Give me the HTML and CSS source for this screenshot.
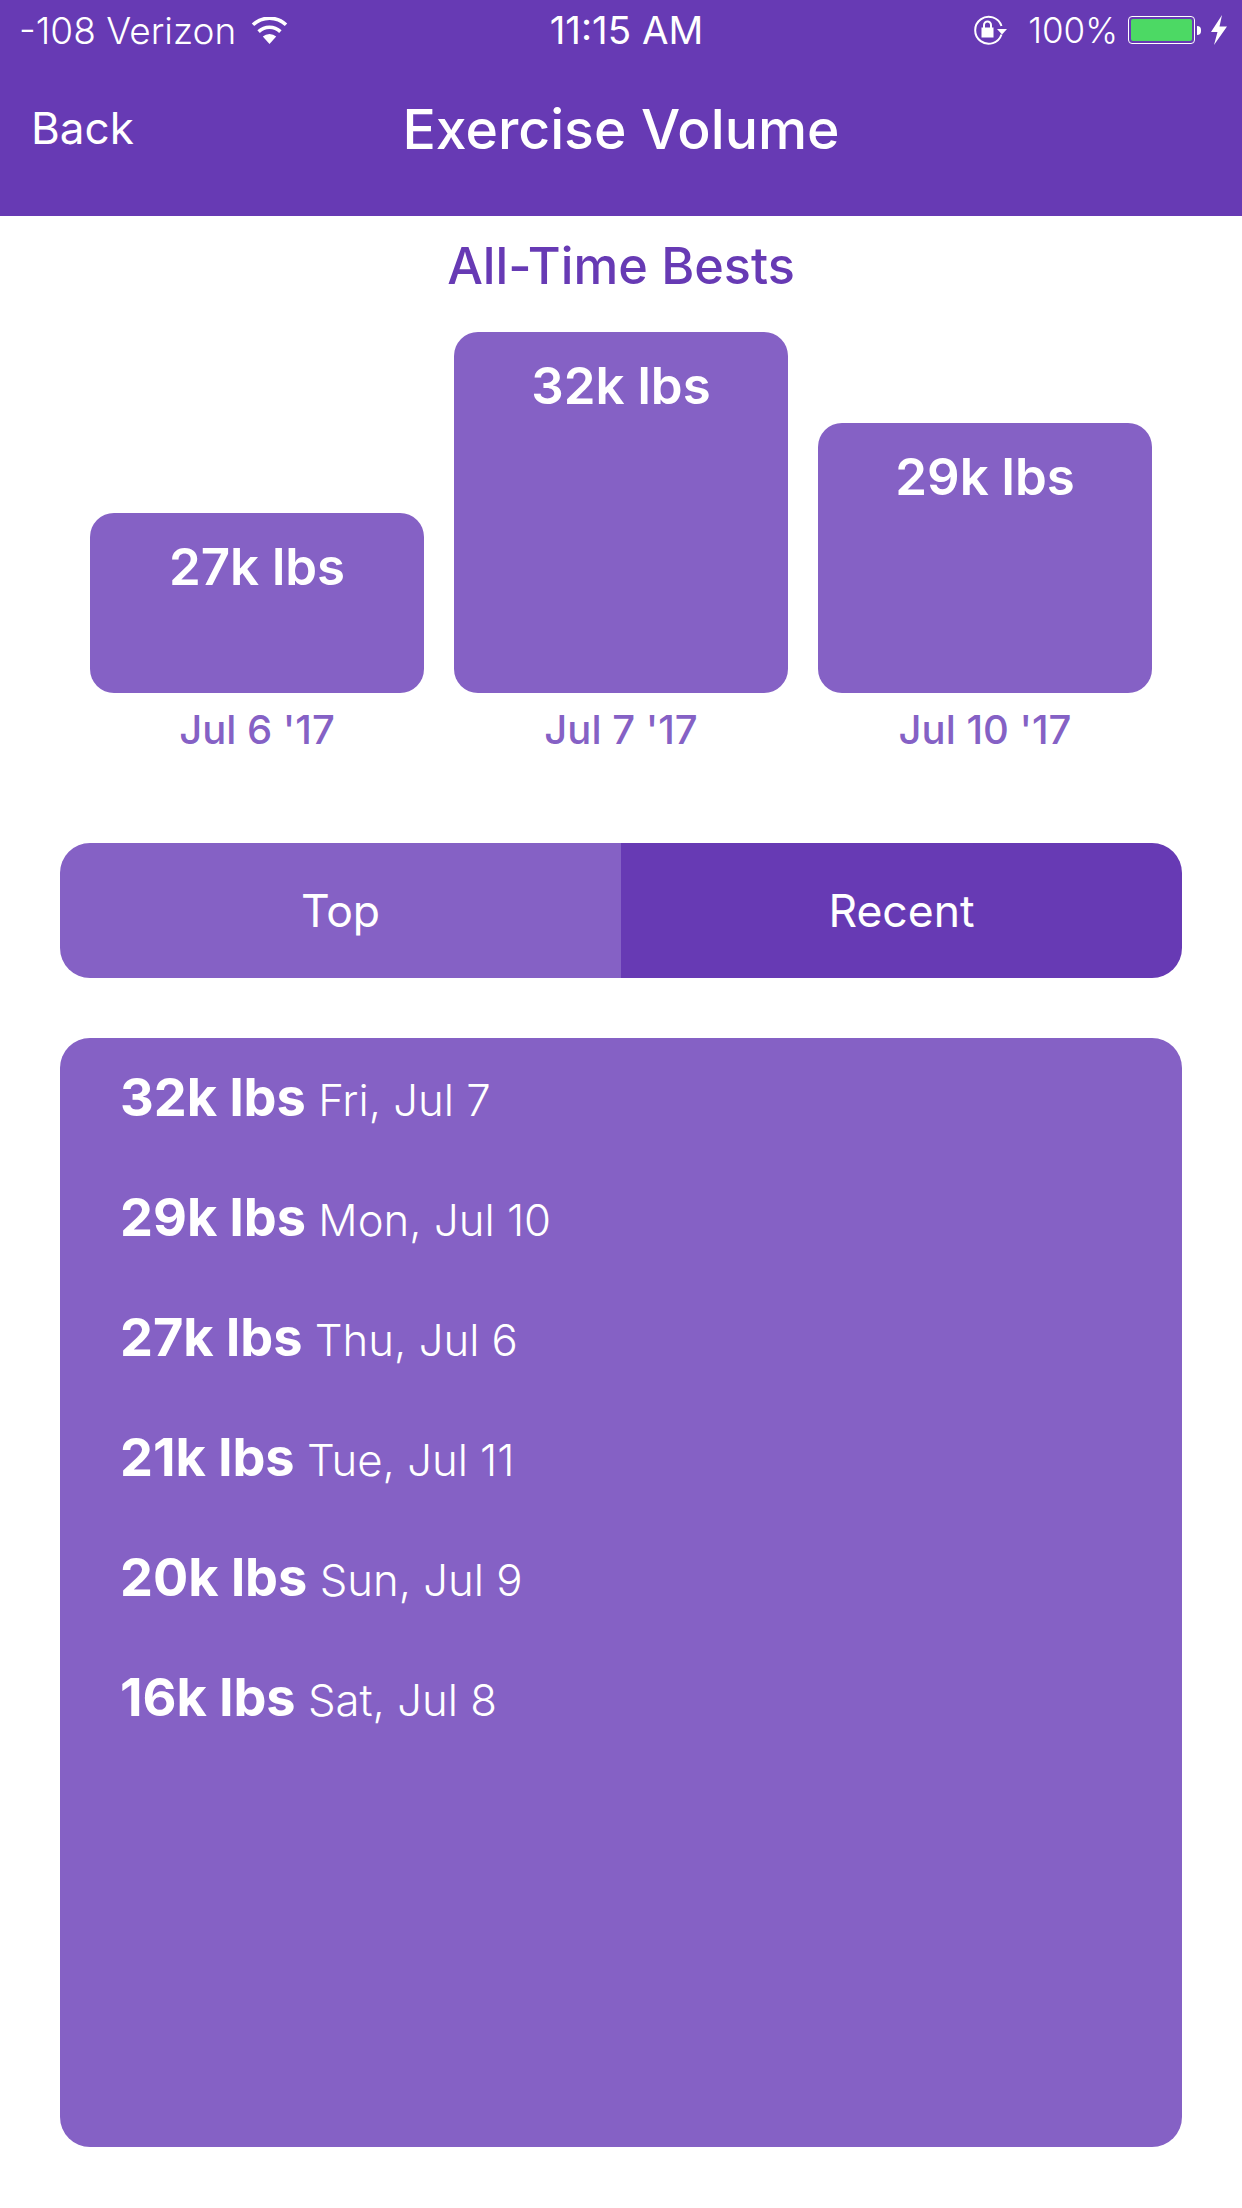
FILE: index.html
```html
<!DOCTYPE html>
<html lang="en">
<head>
  <meta charset="UTF-8" />
  <title>Exercise Volume</title>
  <link rel="stylesheet" href="styles.css">
</head>
<body>
  <div class="topbar">
    <div class="status">
      <div class="status-left">
        <span class="carrier">-108 Verizon</span>
        <svg class="wifi" width="37" height="27" viewBox="0 0 37 27">
          <path d="M18.5 27 L11.8 19.6 A10 10 0 0 1 25.2 19.6 Z" fill="#fff"/>
          <path d="M7.6 14.6 A16 16 0 0 1 29.4 14.6" fill="none" stroke="#fff" stroke-width="3.6"/>
          <path d="M2 7.8 A24 24 0 0 1 35 7.8" fill="none" stroke="#fff" stroke-width="3.6"/>
        </svg>
      </div>
      <span class="time">11:15 AM</span>
      <div class="status-right">
        <svg class="lock" width="35" height="30" viewBox="0 0 35 30">
          <path d="M28.5 19.5 A13.5 13.5 0 1 1 28.5 11" fill="none" stroke="#fff" stroke-width="2"/>
          <path d="M24 14 H34 L29 19.5 Z" fill="#fff"/>
          <rect x="8.5" y="12.5" width="12" height="10" fill="#fff"/>
          <path d="M11 13 V10 A3.5 3.5 0 0 1 18 10 V13" fill="none" stroke="#fff" stroke-width="2"/>
        </svg>
        <span class="batt-text">100%</span>
        <div class="battery"><div class="battery-fill"></div></div>
        <div class="battery-tip"></div>
        <svg class="bolt" width="16" height="30" viewBox="0 0 16 30">
          <path d="M11 0 L0 17 H6.5 L3 30 L16 11.5 H8.5 Z" fill="#fff"/>
        </svg>
      </div>
    </div>
    <div class="nav">
      <span class="back">Back</span>
      <span class="title">Exercise Volume</span>
      <span></span>
    </div>
  </div>

  <h2 class="bests-title">All-Time Bests</h2>

  <div class="chart">
    <div class="col">
      <div class="bar bar-27">27k lbs</div>
      <div class="col-date">Jul 6 '17</div>
    </div>
    <div class="col">
      <div class="bar bar-32">32k lbs</div>
      <div class="col-date">Jul 7 '17</div>
    </div>
    <div class="col">
      <div class="bar bar-29">29k lbs</div>
      <div class="col-date">Jul 10 '17</div>
    </div>
  </div>

  <div class="tabs">
    <div class="tab">Top</div>
    <div class="tab tab-on">Recent</div>
  </div>

  <div class="panel">
    <div class="row"><strong>32k lbs</strong> Fri, Jul 7</div>
    <div class="row"><strong>29k lbs</strong> Mon, Jul 10</div>
    <div class="row"><strong>27k lbs</strong> Thu, Jul 6</div>
    <div class="row"><strong>21k lbs</strong> Tue, Jul 11</div>
    <div class="row"><strong>20k lbs</strong> Sun, Jul 9</div>
    <div class="row"><strong>16k lbs</strong> Sat, Jul 8</div>
  </div>
</body>
</html>
```

FILE: styles.css
```css
body {
  margin: 0;
  width: 1242px;
  height: 2208px;
  overflow: hidden;
  background: #fff;
  font-family: Inter, "Noto Sans", sans-serif;
  color: #fff;
}
.topbar {
  height: 216px;
  background: #673ab4;
}
.status {
  height: 60px;
  display: grid;
  grid-template-columns: 1fr auto 1fr;
  align-items: center;
  font-size: 37px;
  font-weight: 300;
}
.status-left {
  display: flex;
  align-items: center;
  padding-left: 19px;
  gap: 15px;
}
.time {
  margin-left: 11px;
  font-weight: 400;
  font-size: 38.5px;
}
.status-right {
  display: flex;
  align-items: center;
  justify-content: flex-end;
  padding-right: 15px;
}
.lock {
  margin-right: 20px;
}
.batt-text {
  font-size: 35px;
}
.battery {
  box-sizing: border-box;
  width: 67px;
  height: 28px;
  margin-left: 10px;
  padding: 2px;
  border: 1px solid #fff;
  border-radius: 4px;
}
.battery-fill {
  height: 100%;
  background: #4cd964;
  border-radius: 2px;
}
.battery-tip {
  width: 4px;
  height: 9px;
  margin: 0 10px 0 2px;
  background: #fff;
  border-radius: 0 4px 4px 0;
}
.nav {
  display: grid;
  grid-template-columns: 1fr auto 1fr;
  align-items: center;
  height: 136px;
  padding-left: 31px;
  padding-right: 31px;
  padding-top: 3px;
  margin-top: -3px;
}
.back {
  font-size: 44px;
  font-weight: 400;
}
.title {
  font-size: 55.3px;
  font-weight: 500;
}
.bests-title {
  margin: 21px 0 0;
  text-align: center;
  font-size: 50.4px;
  line-height: 58px;
  font-weight: 500;
  color: #673ab4;
}
.chart {
  display: flex;
  justify-content: center;
  align-items: flex-end;
  gap: 30px;
  height: 452px;
  margin-top: 6px;
}
.col {
  width: 334px;
}
.bar {
  background: #8561c5;
  border-radius: 24px;
  text-align: center;
  font-size: 51px;
  line-height: 58px;
  font-weight: 600;
  padding-top: 25px;
  box-sizing: border-box;
}
.bar-27 {
  height: 180px;
}
.bar-32 {
  height: 361px;
}
.bar-29 {
  height: 270px;
}
.col-date {
  margin-top: 14px;
  height: 46px;
  line-height: 46px;
  text-align: center;
  font-size: 40px;
  font-weight: 500;
  color: #8561c5;
}
.tabs {
  display: flex;
  height: 135px;
  margin: 90px 60px 0;
  border-radius: 30px;
  overflow: hidden;
  font-size: 44.5px;
}
.tab {
  flex: 1;
  display: flex;
  align-items: center;
  justify-content: center;
  background: #8561c5;
}
.tab-on {
  background: #673ab4;
}
.panel {
  box-sizing: border-box;
  height: 1109px;
  margin: 60px 60px 0;
  padding: 25px 0 0 60px;
  background: #8561c5;
  border-radius: 30px;
  font-size: 43.7px;
  font-weight: 300;
}
.row {
  height: 120px;
  line-height: 68px;
}
.row strong {
  font-size: 52.3px;
  font-weight: 700;
}
```
